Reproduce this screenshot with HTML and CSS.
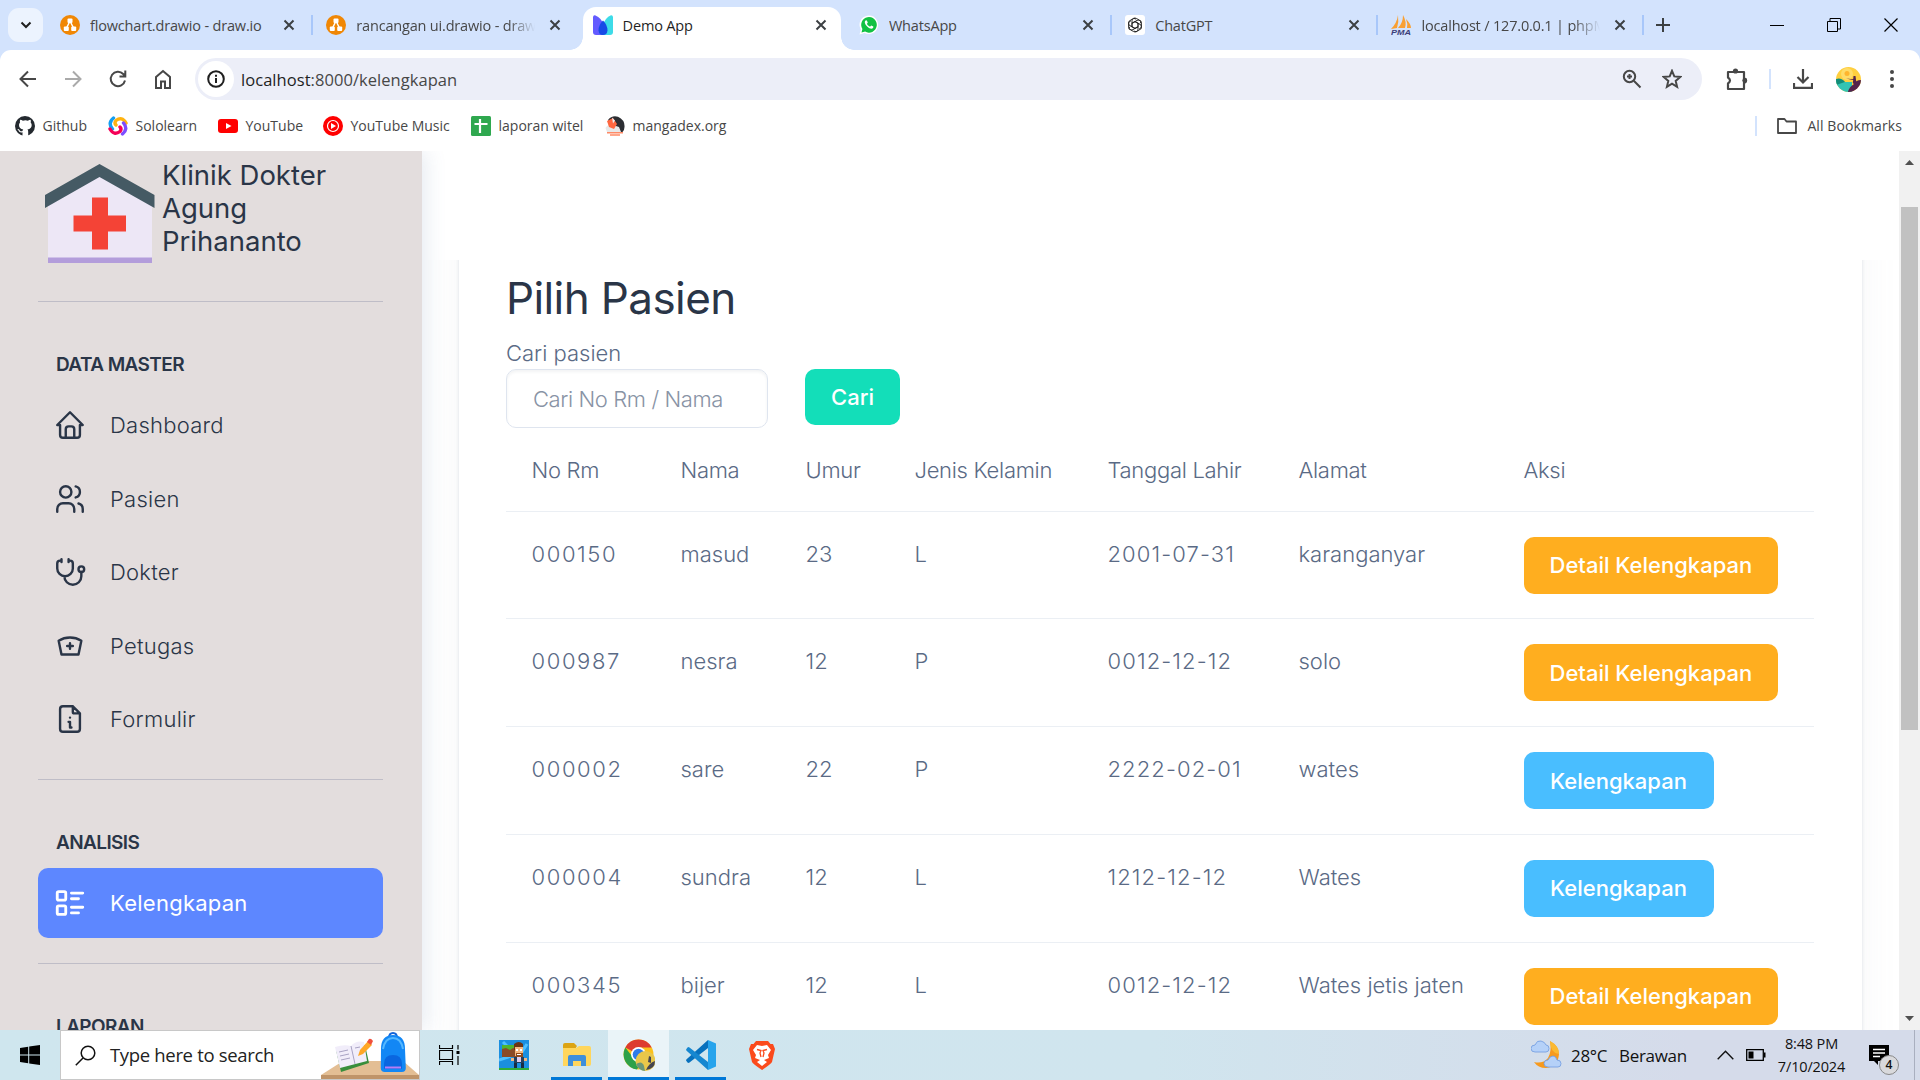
FILE: index.html
```html
<!DOCTYPE html>
<html lang="id">
<head>
<meta charset="utf-8">
<title>Demo App</title>
<link rel="stylesheet" href="styles.css">
</head>
<body>
<svg class="defs" aria-hidden="true">
  <symbol id="x" viewBox="0 0 12 12"><path d="M1.500 1.500l9 9M10.500 1.500l-9 9" fill="none" stroke="#3c4043" stroke-width="2"/></symbol>
  <symbol id="drawio" viewBox="0 0 20 20"><circle cx="10" cy="10" r="10" fill="#f08705"/><path d="M10 6L6.500 13M10 6l3.500 7" stroke="#fff" stroke-width="1.500"/><rect x="7.500" y="3.500" width="5" height="4.500" rx="1" fill="#fff"/><rect x="3.800" y="11.500" width="5" height="4.500" rx="1" fill="#fff"/><rect x="11.200" y="11.500" width="5" height="4.500" rx="1" fill="#fff"/></symbol>
</svg>

<header class="tabs">
  <button class="tab-menu"><svg width="12" height="8" viewBox="0 0 12 8"><path d="M1.500 1.500L6 6l4.500-4.500" fill="none" stroke="#1f1f1f" stroke-width="2"/></svg></button>
  <div class="tab"><svg class="fav"><use href="#drawio"/></svg><span class="tt">flowchart.drawio - draw.io</span><svg class="x"><use href="#x"/></svg></div>
  <div class="tab sep"><svg class="fav"><use href="#drawio"/></svg><span class="tt fade">rancangan ui.drawio - draw.io</span><svg class="x"><use href="#x"/></svg></div>
  <div class="tab active">
    <svg class="fav" viewBox="0 0 20 20"><path d="M0 2Q.3 0 2 .3Q9 3 11 11V20H3Q0 20 0 17z" fill="#635bff"/><path d="M20 2Q19.700 0 18 .3Q12 3 10 10V20H17Q20 20 20 17z" fill="#3ddbe8"/><path d="M10 5.500Q14.500 10 14.500 15.500Q14 20 10 20Q6 20 5.500 15.500Q5.500 10 10 5.500z" fill="#174be6"/></svg>
    <span class="tt">Demo App</span><svg class="x"><use href="#x"/></svg></div>
  <div class="tab">
    <svg class="fav" viewBox="0 0 20 20"><path d="M.5 19.500L1.800 14.500A9.300 9.300 0 1 1 5.500 18z" fill="#fff"/><path d="M2.500 17.500l.9-3.500a7.800 7.800 0 1 1 2.700 2.600z" fill="#12c143"/><path d="M6.600 5.500c-1.500 1-.8 3.600 1.600 6 2.400 2.300 4.900 2.900 5.900 1.300.5-.9.300-1.200-.2-1.500l-1.700-.8-1.200 1.200c-1.500-.6-2.500-1.700-3.100-2.900l.9-1-.8-2q-.3-.7-1.400-.3z" fill="#fff"/></svg>
    <span class="tt">WhatsApp</span><svg class="x"><use href="#x"/></svg></div>
  <div class="tab sep">
    <svg class="fav" viewBox="0 0 20 20"><rect width="20" height="20" rx="3" fill="#fff"/><g fill="none" stroke="#222" stroke-width=".9"><path id="g" d="M7 8.300V5.900a2.900 2.900 0 0 1 4.350-2.500l2.800 1.600a2.900 2.900 0 0 1 1.400 3.200M7 8.300v3.500l3 1.700"/><use href="#g" transform="rotate(60 10 10)"/><use href="#g" transform="rotate(120 10 10)"/><use href="#g" transform="rotate(180 10 10)"/><use href="#g" transform="rotate(240 10 10)"/><use href="#g" transform="rotate(300 10 10)"/></g></svg>
    <span class="tt">ChatGPT</span><svg class="x"><use href="#x"/></svg></div>
  <div class="tab sep">
    <svg class="fav" viewBox="0 0 20 20"><path d="M7 0q1 7-1 13l-6 1Q6 8 7 0zM12 0q4 7 2 13H7Q12 8 12 0zM15 4q5 5 5 9h-4q1-4-1-9z" fill="#f9a033"/><text x="0" y="19.500" class="pma" textLength="20" lengthAdjust="spacingAndGlyphs">PMA</text></svg>
    <span class="tt fade">localhost / 127.0.0.1 | phpMyAdmin</span><svg class="x"><use href="#x"/></svg></div>
  <div class="newtab"><svg width="14" height="14" viewBox="0 0 14 14"><path d="M7 0v14M0 7h14" stroke="#3c4043" stroke-width="2"/></svg></div>
  <div class="wincontrols">
    <svg width="14" height="14"><path d="M0 7.500h14" stroke="#000"/></svg>
    <svg width="14" height="14"><path d="M.5 3.500h10v10h-10zM3 3V.5h10.500V11H11" fill="none" stroke="#000"/></svg>
    <svg width="14" height="14"><path d="M.5.5l13 13M13.500.5l-13 13" stroke="#000" stroke-width="1.200"/></svg>
  </div>
</header>

<div class="toolbar">
  <div class="navs">
    <svg viewBox="0 0 20 20"><path d="M18 10H3M10 2.500L2.500 10l7.500 7.500" fill="none" stroke="#474747" stroke-width="2"/></svg>
    <svg viewBox="0 0 20 20"><path d="M2 10h15M10 2.500l7.500 7.500-7.500 7.500" fill="none" stroke="#aaa" stroke-width="2"/></svg>
    <svg viewBox="0 0 20 20"><path d="M17 11.500A7.200 7.200 0 1 1 15.200 5L17 7M17.300 1.500V7.500H11.500" fill="none" stroke="#474747" stroke-width="2"/></svg>
    <svg viewBox="0 0 20 20"><path d="M3 8L10 2l7 6v11h-5v-6.500H8V19H3z" fill="none" stroke="#474747" stroke-width="2"/></svg>
  </div>
  <div class="omnibox">
    <span class="info"><svg width="18" height="18" viewBox="0 0 18 18"><circle cx="9" cy="9" r="7.800" fill="none" stroke="#1f1f1f" stroke-width="2"/><path d="M9 8v5M9 4.700v2" stroke="#1f1f1f" stroke-width="2"/></svg></span>
    <span class="url"><b>localhost</b>:8000/kelengkapan</span>
    <svg class="zm" width="20" height="20" viewBox="0 0 20 20"><circle cx="7.500" cy="7.500" r="5.700" fill="none" stroke="#474747" stroke-width="2"/><path d="M11.800 11.800L18.500 18.500M7.500 5v5M5 7.500h5" stroke="#474747" stroke-width="2"/></svg>
    <svg class="star" width="20" height="20" viewBox="0 0 20 20"><path d="M10 1.800l2.300 5.600 6 .5-4.600 4 1.400 5.900-5.100-3.100-5.100 3.100 1.400-5.900-4.600-4 6-.5z" fill="none" stroke="#474747" stroke-width="2"/></svg>
  </div>
  <div class="tools">
    <svg width="22" height="24" viewBox="0 0 22 24"><path d="M2 5h16v6.500a2 2 0 0 1 0 4V22H2v-5.500q4-3 0-6z" fill="none" stroke="#474747" stroke-width="2.200" stroke-linejoin="round"/><circle cx="9.500" cy="4" r="2.600" fill="#474747"/><circle cx="18.700" cy="13.500" r="2.400" fill="#474747"/></svg>
    <i class="bar"></i>
    <svg class="dl" width="20" height="20" viewBox="0 0 20 20"><path d="M10 0v13M4.500 8l5.500 5.500L15.500 8M1 14v4.800h18V14" fill="none" stroke="#474747" stroke-width="2.200"/></svg>
    <svg class="av" width="25" height="25" viewBox="0 0 25 25"><clipPath id="c"><circle cx="12.500" cy="12.500" r="12.500"/></clipPath><g clip-path="url(#c)"><path d="M0 0h25v25H0z" fill="#ffcf3f"/><circle cx="11" cy="7" r="6" fill="#ffdc68"/><circle cx="11" cy="6.500" r="2.500" fill="#ffb52d"/><path d="M0 13q5-3 9 2h7v10H0z" fill="#32c4b3"/><path d="M0 12q5-2 9 3l-9 3z" fill="#138c78"/><path d="M25 13q-5 0-7 4-5 3-6 8h13z" fill="#54244c"/><path d="M17.500 9l2 0 .8 6-1.500 3-2-2zM10 11.500l8 .8v1z" fill="#54244c"/></g></svg>
    <svg class="dots" width="4" height="20" viewBox="0 0 4 20"><circle cx="2" cy="3" r="2" fill="#474747"/><circle cx="2" cy="10" r="2" fill="#474747"/><circle cx="2" cy="17" r="2" fill="#474747"/></svg>
  </div>
</div>

<div class="bookmarks">
  <a class="b1"><svg viewBox="0 0 20 20"><circle cx="10" cy="10" r="10" fill="#24292f"/><path d="M7.500 20v-3.800q-3 .8-4-1.700-.4-.8-1.200-1.300 1.500-.4 2.500 1.200 1 1.300 2.700.6.200-1 .8-1.400-4.300-.7-4.300-4.600 0-1.500 1-2.600-.4-1.400.2-2.700 1.400 0 2.700 1a9.500 9.500 0 0 1 5 0q1.300-1 2.700-1 .5 1.400.1 2.700 1 1.100 1 2.600 0 3.900-4.300 4.600.8.600.8 2.200V20z" fill="#fff"/></svg><span>Github</span></a>
  <a class="b2"><svg viewBox="0 0 20 20"><g fill="none" stroke-width="3.400" stroke-linecap="round"><path d="M5.500 2Q-.5 7 4.500 13" stroke="#149ef2"/><path d="M18 7Q14 0 8 4.500Q6 7 8 9" stroke="#ffb30f"/><path d="M14.500 18Q20.500 13 15.500 7" stroke="#7c4dff"/><path d="M2 13Q6 20 12 15.500Q14 13 12 11" stroke="#f50057"/></g></svg><span>Sololearn</span></a>
  <a class="b3"><svg viewBox="0 0 20 20"><rect y="3" width="20" height="14" rx="3" fill="#f00"/><path d="M8 7l5.500 3L8 13z" fill="#fff"/></svg><span>YouTube</span></a>
  <a class="b4"><svg viewBox="0 0 20 20"><circle cx="10" cy="10" r="10" fill="#f00"/><circle cx="10" cy="10" r="5.500" fill="none" stroke="#fff" stroke-width="1.200"/><path d="M8 7l5 3-5 3z" fill="#fff"/></svg><span>YouTube Music</span></a>
  <a class="b5"><svg viewBox="0 0 20 20"><rect width="20" height="20" rx="1.500" fill="#2fa84f"/><path d="M9 3v14M3.500 8h13" stroke="#fff" stroke-width="2.200"/></svg><span>laporan witel</span></a>
  <a class="b6"><svg viewBox="0 0 20 20"><path d="M3 4Q7-1 13 .8 20 4 19.500 11q0 3-2 5H9z" fill="#2c2e33"/><path d="M.5 12Q3 8 8 9l6 2 2 5H2z" fill="#e8e8e8"/><path d="M2 5l6-3 4 6-3 5-5-2z" fill="#ff6740"/><path d="M7 1.500l3 3-2 3z" fill="#eee"/><path d="M2 16.800h16M5 19h10" stroke="#ff8a66" stroke-width="1.500"/></svg><span>mangadex.org</span></a>
  <div class="allbm"><i class="bar"></i><svg viewBox="0 0 20 20"><path d="M1 3h6.500l2 2.500H19V17H1z" fill="none" stroke="#474747" stroke-width="1.800" stroke-linejoin="round"/></svg><span>All Bookmarks</span></div>
</div>

<div class="page">
  <aside class="sidebar">
    <div class="brand">
      <svg width="110" height="100" viewBox="0 0 110 100"><path d="M3 40L54.500 8 107 40v54H3z" fill="#ede7f6"/><path d="M3 93.500h104V99H3z" fill="#b39ddb"/><path d="M54.500 0L109.500 31v13L54.500 13 0 44V31z" fill="#455a64"/><path d="M47 33.500h16v18h18v16H63v18H47v-18H28.500v-16H47z" fill="#f44336"/></svg>
      <h1>Klinik Dokter<br>Agung<br>Prihananto</h1>
    </div>
    <hr>
    <h2>DATA MASTER</h2>
    <nav>
      <a><svg class="ti" viewBox="0 0 24 24"><path d="M5 12H3l9-9 9 9h-2M5 12v7a2 2 0 0 0 2 2h10a2 2 0 0 0 2-2v-7M9 21v-6a2 2 0 0 1 2-2h2a2 2 0 0 1 2 2v6"/></svg><span>Dashboard</span></a>
      <a><svg class="ti" viewBox="0 0 24 24"><circle cx="9" cy="7" r="4"/><path d="M3 21v-2a4 4 0 0 1 4-4h4a4 4 0 0 1 4 4v2M16 3.130a4 4 0 0 1 0 7.750M21 21v-2a4 4 0 0 0-3-3.850"/></svg><span>Pasien</span></a>
      <a><svg class="ti" viewBox="0 0 24 24"><path d="M6 4H5a2 2 0 0 0-2 2v3.500a5.500 5.500 0 0 0 11 0V6a2 2 0 0 0-2-2h-1M8 15a6 6 0 1 0 12 0v-3M11 3v2M6 3v2"/><circle cx="20" cy="10" r="2"/></svg><span>Dokter</span></a>
      <a><svg class="ti" viewBox="0 0 24 24"><path d="M12 6c2.941 0 5.685.847 8 2.310L18 18H6L4 8.309A14.930 14.930 0 0 1 12 6zM10 12h4M12 10v4"/></svg><span>Petugas</span></a>
      <a><svg class="ti" viewBox="0 0 24 24"><path d="M14 3v4a1 1 0 0 0 1 1h4M17 21H7a2 2 0 0 1-2-2V5a2 2 0 0 1 2-2h7l5 5v11a2 2 0 0 1-2 2zM11 14h1v4h1M12 11h.01"/></svg><span>Formulir</span></a>
    </nav>
    <hr>
    <h2>ANALISIS</h2>
    <nav>
      <a class="on"><svg class="ti" viewBox="0 0 24 24"><path d="M13 5h8M13 9h5M13 15h8M13 19h5"/><rect x="3" y="4" width="6" height="6" rx="1"/><rect x="3" y="14" width="6" height="6" rx="1"/></svg><span>Kelengkapan</span></a>
    </nav>
    <hr class="last">
    <h2>LAPORAN</h2>
  </aside>
  <main>
    <div class="topbar"></div>
    <section class="card">
      <h3>Pilih Pasien</h3>
      <label for="q">Cari pasien</label>
      <form>
        <input id="q" placeholder="Cari No Rm / Nama">
        <button type="button" class="btn green">Cari</button>
      </form>
      <table>
        <colgroup><col class="c1"><col class="c2"><col class="c3"><col class="c4"><col class="c5"><col class="c6"><col></colgroup>
        <thead><tr><td>No Rm</td><td>Nama</td><td>Umur</td><td>Jenis Kelamin</td><td>Tanggal Lahir</td><td>Alamat</td><td>Aksi</td></tr></thead>
        <tbody>
          <tr><td class="rm">000150</td><td>masud</td><td>23</td><td>L</td><td class="date">2001-07-31</td><td>karanganyar</td><td><button class="btn orange">Detail Kelengkapan</button></td></tr>
          <tr><td class="rm">000987</td><td>nesra</td><td>12</td><td>P</td><td class="date">0012-12-12</td><td>solo</td><td><button class="btn orange">Detail Kelengkapan</button></td></tr>
          <tr><td class="rm">000002</td><td>sare</td><td>22</td><td>P</td><td class="date">2222-02-01</td><td>wates</td><td><button class="btn blue">Kelengkapan</button></td></tr>
          <tr><td class="rm">000004</td><td>sundra</td><td>12</td><td>L</td><td class="date">1212-12-12</td><td>Wates</td><td><button class="btn blue">Kelengkapan</button></td></tr>
          <tr><td class="rm">000345</td><td>bijer</td><td>12</td><td>L</td><td class="date">0012-12-12</td><td>Wates jetis jaten</td><td><button class="btn orange">Detail Kelengkapan</button></td></tr>
        </tbody>
      </table>
    </section>
  </main>
  <div class="scroll">
    <svg width="9" height="5" viewBox="0 0 9 5"><path d="M0 5L4.500 0 9 5z" fill="#505050"/></svg>
    <div class="thumb"></div>
    <svg width="9" height="5" viewBox="0 0 9 5"><path d="M0 0l4.500 5L9 0z" fill="#505050"/></svg>
  </div>
</div>

<footer class="taskbar">
  <div class="start"><svg width="20" height="20" viewBox="0 0 20 20"><path d="M0 3l8.200-1.200v7.700H0zM9.200 1.600L20 0v9.500H9.200zM0 10.500h8.200v7.700L0 17zM9.200 10.500H20V20L9.200 18.400z"/></svg></div>
  <div class="search">
    <svg class="mag" width="21" height="21" viewBox="0 0 21 21"><circle cx="13" cy="8" r="6.800" fill="none" stroke="#111" stroke-width="1.500"/><path d="M8 13L.8 20.300" stroke="#111" stroke-width="1.500"/></svg>
    <span>Type here to search</span>
    <svg class="desk" width="98" height="48" viewBox="0 0 98 48"><path d="M22 30h60l16 14H0z" fill="#e3be94"/><path d="M0 44h98v4H0z" fill="#bf9469"/><path d="M15 19l5 22 28-9-4-18z" fill="#388e3c"/><path d="M14 16l5 21 27-7-3-19q-8-2-13 4-7-2-16 1z" fill="#f1edfa"/><path d="M30 15l4 18M18 21l9-2M19 25l9-2M20 29l9-2M34 17l5-1" stroke="#a9a3c4"/><path d="M37 25l2-6 8-9 4 4-9 9z" fill="#ffa726"/><path d="M46 11l2-3q2-1 4 2l-2 4z" fill="#f0503c"/><path d="M68 7q0-5 4-5t4 5" fill="none" stroke="#1565d8" stroke-width="2"/><path d="M60 18Q60 4 72 4t12 14l.8 19q0 4-4 4h-17q-4 0-4-4z" fill="#1287f5"/><path d="M62 18q2-11 10-11t10 11" fill="none" stroke="#55b8ff" stroke-width="2"/><path d="M63 33q0-9 9-9t9 9v4q0 1-1 1H64q-1 0-1-1z" fill="#0a66e0"/><path d="M64 36.500h16" stroke="#b77cf5" stroke-width="2"/></svg>
  </div>
  <div class="app tv"><svg width="22" height="20" viewBox="0 0 22 20"><path d="M.5 0v3.500h13V0M.5 20v-3.500h13V20M.5 5.500h13v9H.5zM19 0v4.500M19 11v9" fill="none" stroke="#000" stroke-width="1.200"/><path d="M17.500 6h3v3h-3z"/></svg></div>
  <div class="app game"><svg width="30" height="30" viewBox="0 0 30 30"><path d="M0 0h30v30H0z" fill="#1b8fe0"/><path d="M4 2l8 8M28 4l-5 8M0 20l12-4" stroke="#4fc0ff" stroke-width="3"/><path d="M0 28h30v2H0z" fill="#2fae3a"/><path d="M3 7h14v10H3z" fill="#8a4b26"/><path d="M3 5h14v4l-3-1-3 2-4-2-4 1z" fill="#4fb52f"/><path d="M15 4q5-4 9 0v6h-9z" fill="#6b3515"/><path d="M16 7h8v9h-8z" fill="#f5b77e"/><path d="M17 13h7v4h-7z" fill="#914b1c"/><path d="M17 9h2v2h-2zM21 9h2v2h-2zM18 14h4v1h-4z" fill="#fff"/><path d="M15 17h10v6H15z" fill="#22405f"/><path d="M18 17h4v5h-4z" fill="#dce"/><path d="M12 18h3v3h-3zM25 18h3v3h-3z" fill="#f5b77e"/><path d="M15 23h3v5h-3zM22 23h3v5h-3z" fill="#162b44"/></svg></div>
  <div class="app open folder"><svg width="28" height="24" viewBox="0 0 28 24"><path d="M0 2q0-2 2-2h9l3 3-2 3H0z" fill="#dca413"/><path d="M0 5h13l3-2h10q2 0 2 2v16q0 2-2 2H0z" fill="#ffd65c"/><path d="M5 23V14q0-2 2-2h14q2 0 2 2v9h-5v-5h-8v5z" fill="#3e8fdb"/></svg></div>
  <div class="app open current"><svg width="32" height="32" viewBox="0 0 32 32"><circle cx="15.500" cy="15.500" r="15" fill="#fbc11b"/><path d="M15.500 15.500L2.300 8.500A15 15 0 0 1 28.700 8.500H15.500z" fill="#dd3b2f"/><path d="M2.300 8.500A15 15 0 0 0 14 30.400L20 20l-10-1.500z" fill="#2da149"/><circle cx="15.500" cy="15.500" r="7.500" fill="#fff"/><circle cx="15.500" cy="15.500" r="5.800" fill="#2f7be9"/><circle cx="22.500" cy="22" r="10" fill="#e9c74a"/><path d="M13 25q6-4 8 2l1 5q-6 0-9-7z" fill="#6a9778"/><path d="M32 22q-6 2-9 9 9-1 9-9zM26 17l2 1v6l-3-1z" fill="#454550"/></svg></div>
  <div class="app open code"><svg width="30" height="30" viewBox="0 0 30 30"><path d="M22 0l8 3.500v23L22 30z" fill="#27a4ec"/><path d="M22 0v8L3.500 22.500q-1 .8-2 0L.4 21q-.7-1 .2-1.700z" fill="#0871bd"/><path d="M22 30v-8L3.500 7.500q-1-.8-2 0L.4 9q-.7 1 .2 1.700z" fill="#1687d0"/></svg></div>
  <div class="app brave"><svg width="26" height="30" viewBox="0 0 26 30"><path d="M7 1h12l2.500 3L24 4l2 5-3 13q-1 2-10 8-9-6-10-8L0 9l2-5 2.500 0z" fill="#fb4a1c"/><path d="M8 5l5 1 5-1 4 5-3 5 1 3-5 2 3 2-5 4-5-4 3-2-5-2 1-3-3-5z" fill="#fff"/><path d="M8 9.500l4 1-1 2.500 1 4M18 9.500l-4 1 1 2.500-1 4" fill="none" stroke="#fb4a1c" stroke-width="1.300"/></svg></div>
  <div class="tray">
    <svg class="wx" width="31" height="29" viewBox="0 0 31 29"><path d="M19 1q9 5 9 13-1 13-13 14-8 0-12-6 9 2 14-4 4-7 2-17z" fill="#f79a1e"/><path d="M19 1q9 5 9 13-9-1-9-13z" fill="#fbb931"/><path d="M4 12q-4 0-4-3.500T4 5q2-5 6-4t5 4q3 0 3 3.500T15 12zM17 27q-4 0-4-3.500t4-3.500q2-4 5-4t4 4q4 0 4 3.500T27 27z" fill="#b5d1f8" stroke="#6f9ae0" stroke-width=".8"/></svg>
    <span class="temp">28°C</span><span class="cond">Berawan</span>
    <svg class="chev" width="17" height="10" viewBox="0 0 17 10"><path d="M.7 9.300l7.800-8 7.800 8" fill="none" stroke="#111" stroke-width="1.400"/></svg>
    <svg class="bat" width="20" height="12" viewBox="0 0 20 12"><path d="M.7.700h16.600v10.600H.7z" fill="none" stroke="#000" stroke-width="1.300"/><path d="M2.500 2.500h5v7h-5zM18 3.500h1.500v5H18z"/></svg>
    <div class="clock"><span>8:48 PM</span><span>7/10/2024</span></div>
    <div class="notif"><svg width="20" height="20" viewBox="0 0 20 20"><path d="M0 0h20v16H9v4l-4-4H0z"/><path d="M4 4.500h12M4 8h12M4 11.500h7" stroke="#fff" stroke-width="1.300"/></svg><b>4</b></div>
    <i class="peek"></i>
  </div>
</footer>
</body>
</html>
```
FILE: styles.css
```css
* { box-sizing: border-box; }
body { margin: 0; width: 1920px; height: 1080px; overflow: hidden; display: flex; flex-direction: column; background: #fff; font-family: "Open Sans", "Noto Sans", sans-serif; font-size: 14.500px; color: #474747; }
svg { flex: none; display: block; }
.defs { position: absolute; width: 0; height: 0; }
button { border: 0; font: inherit; padding: 0; }

/* tab strip */
.tabs { height: 50px; flex: none; display: flex; background: #d3e3fd; }
.tab-menu { width: 35px; height: 34px; margin: 8px 3px 0 8px; border-radius: 11px; background: #ecf3fe; display: grid; place-items: center; }
.tab { width: 266.300px; flex: none; display: flex; align-items: center; padding: 0 17.500px 0 14px; position: relative; }
.fav { width: 20px; height: 20px; margin-right: 10px; }
.tt { flex: 1; white-space: nowrap; overflow: hidden; letter-spacing: -.18px; line-height: 24px; padding-top: 1px; }
.fade { -webkit-mask-image: linear-gradient(90deg, #000 84%, transparent 99%); mask-image: linear-gradient(90deg, #000 84%, transparent 99%); }
.x { width: 12px; height: 12px; margin-left: 12px; }
.sep::before { content: ""; position: absolute; left: -1px; top: 15px; width: 2px; height: 20px; background: #a8c7fa; }
.active { color: #1f1f1f; z-index: 1; }
.active > * { position: relative; }
.active::before { content: ""; position: absolute; left: 4px; right: 4px; top: 7px; bottom: 0; background: #fff; border-radius: 13px 13px 0 0; }
.active::after { content: ""; position: absolute; left: -9px; right: -9px; bottom: 0; height: 13px; background: radial-gradient(circle at 0 0, transparent 12.500px, #fff 13px) left / 13px 13px no-repeat, radial-gradient(circle at 100% 0, transparent 12.500px, #fff 13px) right / 13px 13px no-repeat; }
.pma { font: italic bold 8px "Liberation Sans", sans-serif; fill: #3d3f7a; }
.newtab { position: relative; padding: 18px 0 0 12.500px; }
.newtab::before { content: ""; position: absolute; left: -2px; top: 15px; width: 2px; height: 20px; background: #a8c7fa; }
.wincontrols { margin-left: auto; display: flex; gap: 43px; padding: 18px 22px 0 0; }

/* toolbar */
.toolbar { height: 58px; flex: none; display: flex; align-items: center; background: linear-gradient(#d3e3fd, #d3e3fd) 0 0 / 100% 12px no-repeat; position: relative; }
.toolbar::before { content: ""; position: absolute; inset: 0; background: #fff; border-radius: 11px 11px 0 0; }
.toolbar > * { position: relative; }
.navs { display: flex; gap: 25px; padding-left: 18px; width: 195px; }
.navs svg { width: 20px; height: 20px; }
.omnibox { width: 1507px; height: 42px; border-radius: 21px; background: #eceef8; display: flex; align-items: center; padding: 0 20px 0 3px; }
.info { width: 36px; flex: none; border-radius: 18px; background: #fff; display: grid; place-items: center; height: 36px; }
.url { flex: 1; margin-left: 7px; font-size: 16.500px; letter-spacing: .05px; }
.url b { font-weight: 400; color: #1f1f1f; }
.zm { margin-right: 20px; }
.tools { display: flex; align-items: center; flex: 1; padding: 0 26px 0 24px; }
.bar { width: 2px; height: 20px; background: #d3e3fd; }
.tools .bar { margin: 0 22px 0 20.500px; }
.av { margin: 0 auto 0 23px; }

/* bookmarks */
.bookmarks { height: 43px; flex: none; display: flex; align-items: center; padding: 0 18px 8px 15px; font-size: 14px; }
.bookmarks a { display: flex; align-items: center; gap: 7.500px; }
.bookmarks svg { width: 20px; height: 20px; }
.bookmarks span { margin-top: -1px; }
.b1 { width: 93px; } .b2 { width: 110px; } .b3 { width: 105px; } .b4 { width: 148px; } .b5 { width: 134px; }
.allbm { margin-left: auto; display: flex; align-items: center; letter-spacing: .1px; }
.allbm svg { margin: 0 10.500px 0 20px; }

/* web page */
.page { height: 879px; flex: none; display: flex; overflow: hidden; font-family: Inter, "Noto Sans", sans-serif; color: #5a6a85; font-weight: 300; font-size: 22px; }
.sidebar { width: 421.500px; flex: none; background: #e3dddd; padding: 13px 38.500px 0 38px; color: #2a3547; overflow: hidden; box-shadow: 3px 0 20px rgba(90, 120, 160, .16); clip-path: inset(0 -40px 0 0); position: relative; z-index: 1; }
.brand { display: flex; height: 100px; padding-left: 7px; gap: 7px; }
h1 { margin: -5px 0 0; font-size: 27.500px; line-height: 33px; font-weight: 400; white-space: nowrap; }
hr { margin: 0; border: 0; height: 1px; background: #bfbdc7; }
.brand + hr { margin-top: 37px; }
h2 { margin: 0; padding: 51px 0 0 18px; height: 88px; font-size: 19px; line-height: 24px; font-weight: 600; letter-spacing: -.6px; white-space: nowrap; }
.sidebar a { height: 70px; margin-bottom: 3.500px; display: flex; align-items: center; padding-left: 15px; gap: 23px; border-radius: 10px; letter-spacing: .25px; }
.sidebar nav + hr { margin-top: 25px; }
.sidebar nav + .last { margin-top: 24.500px; }
.sidebar .on { margin-bottom: 0; background: #5d87ff; color: #fff; font-weight: 400; }
.ti { width: 34px; height: 34px; fill: none; stroke: currentColor; stroke-width: 1.700; stroke-linecap: round; stroke-linejoin: round; }
.sidebar .on .ti { stroke-width: 2; }
main { flex: 1; }
.topbar { height: 109px; background: #fff; position: relative; }
.card { margin: -70px 37.500px 0 37.500px; height: 960px; padding: 81px 46px 0 47px; background: #fff; box-shadow: 0 0 3px rgba(120, 140, 160, .25), 0 12px 36px rgba(145, 158, 171, .08); clip-path: inset(70px -38px 0 -38px); }
h3 { margin: 0 0 13px; font-size: 44px; line-height: 54px; font-weight: 400; color: #2a3547; letter-spacing: -.6px; white-space: nowrap; }
label { display: block; line-height: 30px; height: 31px; }
form { display: flex; gap: 37px; align-items: flex-start; }
input { width: 262px; height: 59px; border: 1.400px solid #dfe5ef; border-radius: 10px; padding: 0 26px; font: 300 22px Inter, sans-serif; letter-spacing: -.4px; box-shadow: inset 0 2px 3px rgba(42, 53, 71, .06); }
input::placeholder { color: #8893a5; opacity: 1; }
.btn { height: 57px; padding: 0 26px; border-radius: 10px; color: #fff; font-weight: 500; font-size: 22px; white-space: nowrap; }
.green { background: #13deb9; width: 95px; height: 56px; }
.orange { background: #ffae1f; width: 254px; }
.blue { background: #49beff; width: 190px; }
table { width: 1308px; table-layout: fixed; border-collapse: collapse; }
.c1 { width: 149px; } .c2 { width: 125px; } .c3 { width: 109px; } .c4 { width: 193px; } .c5 { width: 191px; } .c6 { width: 225px; }
td { padding: 25px 0 0 25.500px; vertical-align: top; line-height: 34px; white-space: nowrap; border-bottom: 1px solid #ebeff4; }
thead td { height: 83px; letter-spacing: -.3px; }
tbody tr { height: 107.750px; }
.rm { letter-spacing: 1.600px; }
.date { letter-spacing: 1.100px; }
.scroll { width: 21px; background: #f1f1f1; display: flex; flex-direction: column; align-items: center; justify-content: space-between; padding: 9px 0; }
.thumb { width: 17px; height: 523px; background: #c1c1c1; margin: 42px 0 auto; }

/* taskbar */
.taskbar { height: 50px; flex: none; display: flex; background: linear-gradient(90deg, #cfe6ee, #d0e5ee 60%, #d5dbea 88%); color: #111; }
.start { width: 60px; padding: 15px 20px; }
.search { width: 360px; background: #fff; border: 1px solid #c8c8c8; display: flex; align-items: center; padding-left: 14px; font-size: 18.500px; letter-spacing: -.33px; color: #222; }
.search span { margin: 0 auto 0 14px; padding-bottom: 1px; white-space: nowrap; }
.app { display: grid; place-items: center; height: 50px; }
.tv { width: 60px; }
.game { width: 66px; margin-left: 1px; }
.folder { width: 51px; margin-left: 4px; }
.current { width: 61px; margin-left: 6px; background: #eaf4f8; }
.code { width: 51px; margin-left: 6px; }
.brave { width: 26px; margin-left: 23px; }
.open { border-bottom: 3px solid #0078d7; padding-top: 2px; }
.tray { margin-left: auto; display: flex; align-items: center; font-size: 17px; white-space: nowrap; width: 384px; }
.tray .wx { margin: 0 9px 2px -5px; }
.temp { width: 48px; letter-spacing: -.3px; }
.cond { width: 98px; letter-spacing: -.3px; }
.chev { margin-right: 12px; }
.bat { margin-right: -1px; }
.clock { width: 93px; display: flex; flex-direction: column; align-items: center; font-size: 14.500px; line-height: 23px; letter-spacing: -.15px; padding-bottom: 1px; }
.notif { position: relative; margin-left: 11px; height: 20px; }
.notif b { position: absolute; left: 10px; top: 10px; width: 20px; height: 20px; border-radius: 50%; background: #d9d9dc; border: 1px solid #888; font: 600 12px/18px "Open Sans", sans-serif; text-align: center; }
.peek { width: 1px; height: 50px; margin-left: auto; margin-right: 5px; background: #a9afbf; }
```
